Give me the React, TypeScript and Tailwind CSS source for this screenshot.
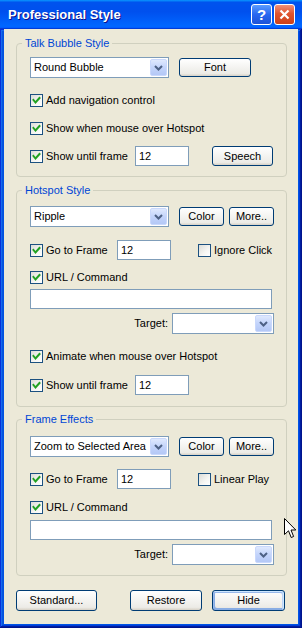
import type { ReactNode } from 'react';

// =================================================================
// XP STYLE DIALOG: "Professional Style"
// =================================================================

const font = "font-['Liberation_Sans',Arial,sans-serif]";

function Check({ on }: { on?: boolean }) {
  return (
    <div className="w-[13px] h-[13px] shrink-0 border border-[#1c5180] bg-[linear-gradient(135deg,#dcdcd7,#f6f6f3_60%,#ffffff)] flex items-center justify-center">
      {on && (
        <svg width="11" height="11" viewBox="0 0 11 11">
          <polyline
            points="2.5,5 4.5,7.5 8.5,3"
            fill="none"
            stroke="#21a121"
            strokeWidth="2"
            strokeLinecap="square"
          />
        </svg>
      )}
    </div>
  );
}

function CheckLabel({ label, on = true, w }: { label: string; on?: boolean; w?: string }) {
  return (
    <div className={`flex items-center h-[13px] ${w ?? ''}`}>
      <Check on={on} />
      <span className="ml-[3px] whitespace-nowrap">{label}</span>
    </div>
  );
}

function Btn({ children, w, h = 'h-[19px]', def }: { children: ReactNode; w: string; h?: string; def?: boolean }) {
  return (
    <div
      className={`${w} ${h} shrink-0 flex items-center justify-center border border-[#003c74] rounded-[3px] bg-[linear-gradient(180deg,#ffffff,#ecebe6_86%,#d6d0c5)] ${
        def
          ? 'shadow-[inset_-1px_1px_#cee7ff,inset_1px_2px_#98b8ea,inset_-2px_2px_#bcd4f6,inset_1px_-1px_#89ade4,inset_2px_-2px_#89ade4]'
          : ''
      }`}
    >
      {children}
    </div>
  );
}

function TextBox({ w, value }: { w: string; value?: string }) {
  return (
    <div className={`${w} h-[20px] shrink-0 border border-[#7f9db9] bg-white flex items-center pl-[3px]`}>
      {value}
    </div>
  );
}

function Combo({ w, value }: { w: string; value?: string }) {
  return (
    <div className={`${w} h-[21px] shrink-0 border border-[#7f9db9] bg-white flex items-center`}>
      <span className="flex-1 pl-[3px] whitespace-nowrap">{value}</span>
      <div className="w-[17px] h-[17px] mr-[1px] rounded-[2px] border border-[#c9d8fc] bg-[linear-gradient(180deg,#dfe9fe,#c3d4fb_50%,#b4c8f6)] flex items-center justify-center">
        <svg width="9" height="6" viewBox="0 0 9 6">
          <polyline points="1,1 4.5,4.5 8,1" fill="none" stroke="#4d6185" strokeWidth="2" />
        </svg>
      </div>
    </div>
  );
}

function Group({ title, className, children }: { title: string; className?: string; children: ReactNode }) {
  return (
    <fieldset className={`ml-[12px] w-[271px] border border-[#d0d0bf] rounded-[4px] p-0 ${className ?? ''}`}>
      <legend className="ml-[5px] px-[3px] leading-[13px] text-[#0046d5]">{title}</legend>
      {children}
    </fieldset>
  );
}

function TargetRow() {
  return (
    <div className="mt-[4px] h-[21px] flex items-center">
      <span className="w-[142px] text-right pr-[4px]">Target:</span>
      <Combo w="w-[102px]" />
    </div>
  );
}

export default function App() {
  return (
    <div className={`relative w-[302px] h-[628px] flex flex-col overflow-hidden text-[11px] leading-[13px] text-black ${font}`}>
      {/* Title bar */}
      <div className="h-[29px] shrink-0 flex items-center pl-[8px] pr-[7px] bg-[linear-gradient(180deg,#0997ff,#0053ee_8%,#0050ee_40%,#0066ff_88%,#0066ff_93%,#005bff_95%,#003dd7_96%,#003dd7)]">
        <span className="flex-1 text-white font-bold text-[13px] [text-shadow:1px_1px_#0f1089]">Professional Style</span>
        <div className="w-[21px] h-[21px] rounded-[3px] border border-white bg-[linear-gradient(180deg,#5a9cff,#2867f0_50%,#1b52d8)] flex items-center justify-center text-white font-bold text-[15px]">
          ?
        </div>
        <div className="ml-[2px] w-[21px] h-[21px] rounded-[3px] border border-white bg-[linear-gradient(180deg,#f0907a,#e0542f_45%,#cc4019)] flex items-center justify-center">
          <svg width="11" height="11" viewBox="0 0 11 11">
            <path d="M1.5 1.5 L9.5 9.5 M9.5 1.5 L1.5 9.5" stroke="white" strokeWidth="2.2" />
          </svg>
        </div>
      </div>

      {/* Window frame + client area */}
      <div className="flex-1 flex px-[4px] pb-[4px] bg-[#0054e3] shadow-[inset_-1px_-1px_#00138c,inset_1px_1px_#0831d9,inset_-2px_-2px_#001ea0,inset_2px_2px_#166aee,inset_-3px_-3px_#003bda,inset_3px_3px_#0855dd]">
        <div className="flex-1 bg-[#ece9d8] flex flex-col">
          {/* Talk Bubble Style */}
          <Group title="Talk Bubble Style" className="mt-[8px]">
            <div className="pl-[13px] pt-[7px] pb-[10px]">
              <div className="h-[21px] flex items-center">
                <Combo w="w-[139px]" value="Round Bubble" />
                <Btn w="w-[72px] ml-[10px]">Font</Btn>
              </div>
              <div className="mt-[16px]">
                <CheckLabel label="Add navigation control" />
              </div>
              <div className="mt-[15px]">
                <CheckLabel label="Show when mouse over Hotspot" />
              </div>
              <div className="mt-[11px] h-[20px] flex items-center">
                <CheckLabel label="Show until frame" w="w-[105px]" />
                <TextBox w="w-[54px]" value="12" />
                <Btn w="w-[61px] ml-[23px]" h="h-[20px]">Speech</Btn>
              </div>
            </div>
          </Group>

          {/* Hotspot Style */}
          <Group title="Hotspot Style" className="mt-[7px]">
            <div className="pl-[13px] pt-[9px] pb-[11px]">
              <div className="h-[21px] flex items-center">
                <Combo w="w-[139px]" value="Ripple" />
                <Btn w="w-[45px] ml-[10px]">Color</Btn>
                <Btn w="w-[45px] ml-[5px]">More..</Btn>
              </div>
              <div className="mt-[13px] h-[20px] flex items-center">
                <CheckLabel label="Go to Frame" w="w-[87px]" />
                <TextBox w="w-[54px]" value="12" />
                <div className="ml-[27px]">
                  <CheckLabel label="Ignore Click" on={false} />
                </div>
              </div>
              <div className="mt-[11px]">
                <CheckLabel label="URL / Command" />
              </div>
              <div className="mt-[5px]">
                <TextBox w="w-[242px]" />
              </div>
              <TargetRow />
              <div className="mt-[16px]">
                <CheckLabel label="Animate when mouse over Hotspot" />
              </div>
              <div className="mt-[12px] h-[20px] flex items-center">
                <CheckLabel label="Show until frame" w="w-[105px]" />
                <TextBox w="w-[54px]" value="12" />
              </div>
            </div>
          </Group>

          {/* Frame Effects */}
          <Group title="Frame Effects" className="mt-[6px]">
            <div className="pl-[13px] pt-[10px] pb-[10px]">
              <div className="h-[21px] flex items-center">
                <Combo w="w-[139px]" value="Zoom to Selected Area" />
                <Btn w="w-[45px] ml-[10px]">Color</Btn>
                <Btn w="w-[45px] ml-[5px]">More..</Btn>
              </div>
              <div className="mt-[12px] h-[20px] flex items-center">
                <CheckLabel label="Go to Frame" w="w-[87px]" />
                <TextBox w="w-[54px]" value="12" />
                <div className="ml-[27px]">
                  <CheckLabel label="Linear Play" on={false} />
                </div>
              </div>
              <div className="mt-[12px]">
                <CheckLabel label="URL / Command" />
              </div>
              <div className="mt-[6px]">
                <TextBox w="w-[242px]" />
              </div>
              <TargetRow />
            </div>
          </Group>

          {/* Footer buttons */}
          <div className="mt-[14px] flex items-center">
            <Btn w="w-[81px] ml-[12px]" h="h-[21px]">Standard...</Btn>
            <Btn w="w-[72px] ml-[33px]" h="h-[21px]">Restore</Btn>
            <Btn w="w-[73px] ml-[10px]" h="h-[21px]" def>Hide</Btn>
          </div>
        </div>
      </div>

      {/* Mouse pointer */}
      <svg className="absolute left-[284px] top-[518px]" width="13" height="21" viewBox="0 0 13 21">
        <path
          d="M0.5 0.5 L0.5 16.5 L4.5 12.8 L7.2 19.5 L9.6 18.5 L7 12 L11.8 12 Z"
          fill="white"
          stroke="black"
          strokeWidth="1"
          strokeLinejoin="miter"
        />
      </svg>
    </div>
  );
}
